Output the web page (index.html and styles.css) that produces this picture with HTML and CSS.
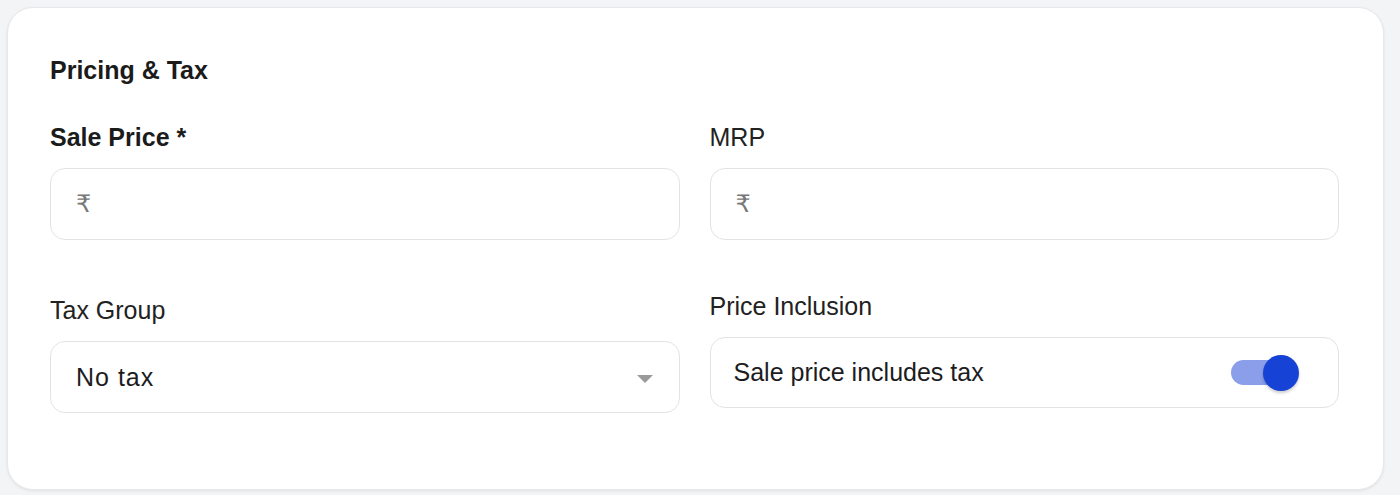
FILE: index.html
```html
<!DOCTYPE html>
<html>
<head>
<meta charset="utf-8">
<link rel="stylesheet" href="styles.css">
</head>
<body>
<section class="card">
  <h2 class="card-title">Pricing &amp; Tax</h2>
  <div class="grid">
    <div class="field">
      <label class="label label-strong">Sale Price *</label>
      <div class="box">
        <span class="currency">₹</span>
      </div>
    </div>
    <div class="field">
      <label class="label">MRP</label>
      <div class="box">
        <span class="currency">₹</span>
      </div>
    </div>
    <div class="field field-lower">
      <label class="label">Tax Group</label>
      <div class="box box-select">
        <span class="select-value">No tax</span>
        <span class="caret"></span>
      </div>
    </div>
    <div class="field">
      <label class="label">Price Inclusion</label>
      <div class="box box-toggle">
        <span class="toggle-text">Sale price includes tax</span>
        <span class="switch"><span class="switch-track"></span><span class="switch-thumb"></span></span>
      </div>
    </div>
  </div>
</section>
</body>
</html>
```

FILE: styles.css
```css
html, body {
  margin: 0;
  padding: 0;
}
body {
  background: #f3f4f6;
  font-family: "Liberation Sans", Arial, sans-serif;
  color: #1c1c1e;
  padding: 7px 16px 5px 7px;
  box-sizing: border-box;
  height: 495px;
}
.card {
  background: #ffffff;
  border: 1px solid #e7e8eb;
  border-radius: 26px;
  box-shadow: 0 1px 3px rgba(0, 0, 0, 0.08);
  padding: 47px 44px 77px 42px;
  height: 100%;
  box-sizing: border-box;
}
.card-title {
  margin: 0;
  font-size: 25px;
  font-weight: 700;
  line-height: 30px;
  color: #1b1b1b;
}
.grid {
  margin-top: 37px;
  display: grid;
  grid-template-columns: 1fr 1fr;
  column-gap: 30px;
  row-gap: 51px;
}
.field {
  display: flex;
  flex-direction: column;
  gap: 16px;
}
.field-lower {
  padding-top: 4px;
}
.label {
  font-size: 25px;
  line-height: 30px;
  color: #222;
}
.label-strong {
  font-weight: 700;
  color: #1b1b1b;
}
.box {
  height: 72px;
  box-sizing: border-box;
  border: 1.5px solid #e3e3e6;
  border-radius: 15px;
  display: flex;
  align-items: center;
  padding: 0 24px;
  background: #fff;
}
.currency {
  font-family: "DejaVu Sans", "Noto Sans", sans-serif;
  font-size: 24px;
  color: #777;
  padding-left: 1px;
}
.box-select {
  justify-content: space-between;
  padding-left: 25px;
  padding-right: 26px;
}
.select-value {
  font-size: 25px;
  color: #1c1c1e;
  letter-spacing: 1px;
}
.caret {
  width: 0;
  height: 0;
  border-left: 8px solid transparent;
  border-right: 8px solid transparent;
  border-top: 8px solid #9a9a9a;
  margin-top: 3px;
}
.box-toggle {
  height: 71px;
  justify-content: space-between;
  padding-left: 23px;
  padding-right: 39px;
}
.toggle-text {
  font-size: 25px;
  color: #1c1c1e;
}
.switch {
  position: relative;
  width: 68px;
  height: 36px;
  display: block;
}
.switch-track {
  position: absolute;
  left: 0;
  top: 5px;
  width: 60px;
  height: 25px;
  border-radius: 13px;
  background: #8a9ee9;
}
.switch-thumb {
  position: absolute;
  right: 0;
  top: 0;
  width: 36px;
  height: 36px;
  border-radius: 50%;
  background: #1742d6;
  box-shadow: 0 2px 3px rgba(0, 0, 0, 0.2);
}
```
